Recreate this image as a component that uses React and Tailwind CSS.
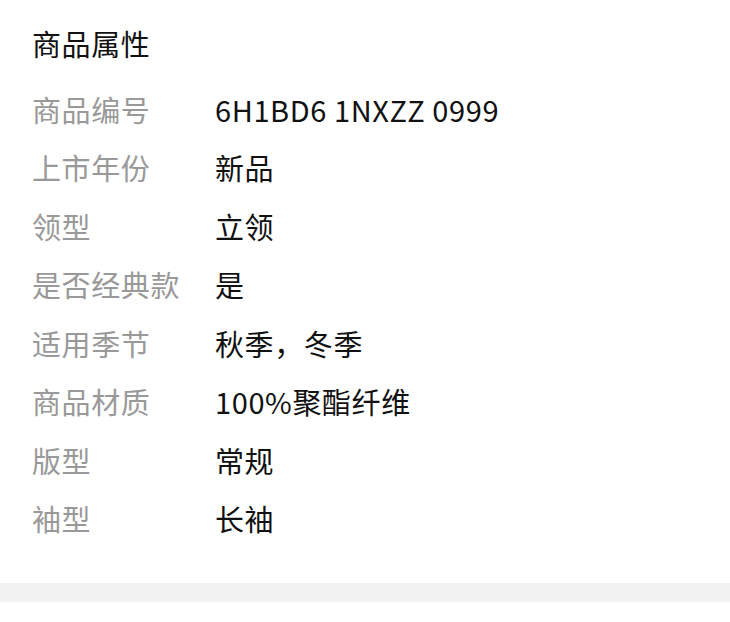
import React from "react";

const rows = [
  ["商品编号", "6H1BD6 1NXZZ 0999"],
  ["上市年份", "新品"],
  ["领型", "立领"],
  ["是否经典款", "是"],
  ["适用季节", "秋季，冬季"],
  ["商品材质", "100%聚酯纤维"],
  ["版型", "常规"],
  ["袖型", "长袖"],
];

export default function App() {
  return (
    <div
      className="w-[730px] h-[622px] bg-white flex flex-col overflow-hidden tracking-[0.6px]"
      style={{ fontFamily: '"Noto Sans CJK SC", "Noto Sans", sans-serif' }}
    >
      <div className="px-[32px]">
        <div className="mt-[23px] h-[40px] leading-[40px] text-[29px] text-[#111]">
          商品属性
        </div>
        <div className="mt-[17px] flex flex-col">
          {rows.map(([k, v]) => (
            <div key={k} className="h-[58.5px] flex items-center text-[29px]">
              <div className="w-[183px] shrink-0 text-[#999]">{k}</div>
              <div className="text-[#111]">{v}</div>
            </div>
          ))}
        </div>
      </div>
      <div className="mt-[35px] h-[19px] bg-[#f2f2f2] shrink-0" />
      <div className="flex-1 bg-white" />
    </div>
  );
}
